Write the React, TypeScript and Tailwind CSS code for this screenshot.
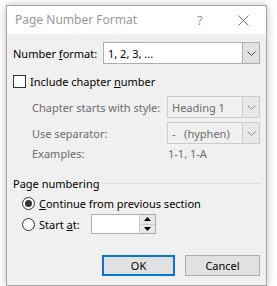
import React from "react";

const Chevron = ({ color = "#404040" }: { color?: string }) => (
    <svg width="9" height="5" viewBox="0 0 9 5" fill="none">
        <path d="M0.5 0.5 L4.5 4.5 L8.5 0.5" stroke={color} strokeWidth="1" />
    </svg>
);

const Dropdown = ({
    value,
    width,
    disabled,
}: {
    value: string;
    width: string;
    disabled?: boolean;
}) => (
    <div
        className={`flex h-[22px] ${width} border ${
            disabled
                ? "border-[#cccccc] bg-[#f0f0f0] text-[#6d6d6d]"
                : "border-[#adadad] bg-white text-black"
        }`}
    >
        <div className="flex flex-1 items-center pl-[4px] whitespace-pre">
            {value}
        </div>
        <div
            className={`flex w-[17px] items-center justify-center border-l ${
                disabled
                    ? "border-[#cccccc] bg-[#e8e8e8]"
                    : "border-[#adadad] bg-[#e1e1e1]"
            }`}
        >
            <Chevron color={disabled ? "#8a8a8a" : "#404040"} />
        </div>
    </div>
);

const Radio = ({ checked }: { checked?: boolean }) => (
    <div className="flex h-[13px] w-[13px] shrink-0 items-center justify-center rounded-full border border-[#333333] bg-white">
        {checked && <div className="h-[7px] w-[7px] rounded-full bg-[#333333]" />}
    </div>
);

const App = () => {
    return (
        <div
            className="h-[286px] w-[277px] bg-white pt-[5px] pl-[6px] text-[11px] leading-none whitespace-nowrap text-black"
            style={{ fontFamily: '"Noto Sans", "Open Sans", sans-serif' }}
        >
            <div className="flex h-[281px] w-[261px] flex-col border border-[#a6a6a6] bg-[#f0f0f0] shadow-[0_0_8px_rgba(0,0,0,0.25)]">
                {/* Title bar */}
                <div className="flex h-[28px] items-center bg-white pl-[8px] text-[12px] text-[#999999]">
                    <span className="flex-1">Page Number Format</span>
                    <span className="w-[14px] text-[13px]">?</span>
                    <div className="ml-[26px] mr-[17px] flex w-[12px] justify-center">
                        <svg width="11" height="11" viewBox="0 0 11 11">
                            <path
                                d="M0.5 0.5 L10.5 10.5 M10.5 0.5 L0.5 10.5"
                                stroke="#777777"
                                strokeWidth="1"
                            />
                        </svg>
                    </div>
                </div>

                {/* Body */}
                <div className="flex flex-col">
                    <div className="mt-[8px] flex h-[22px] items-center pl-[6px]">
                        <span className="w-[90px]">
                            Number <u>f</u>ormat:
                        </span>
                        <Dropdown value="1, 2, 3, ..." width="w-[157px]" />
                    </div>

                    <div className="mt-[11px] flex h-[13px] items-center pl-[6px]">
                        <div className="h-[13px] w-[13px] border border-[#333333] bg-white" />
                        <span className="ml-[4px]">
                            Include chapter <u>n</u>umber
                        </span>
                    </div>

                    <div className="mt-[8px] flex h-[22px] items-center pl-[25px] text-[#6d6d6d]">
                        <span className="w-[135px]">Chapter starts with style:</span>
                        <Dropdown value="Heading 1" width="w-[93px]" disabled />
                    </div>

                    <div className="mt-[4px] flex h-[22px] items-center pl-[25px] text-[#6d6d6d]">
                        <span className="w-[135px]">Use separator:</span>
                        <Dropdown value="-   (hyphen)" width="w-[93px]" disabled />
                    </div>

                    <div className="flex h-[18px] items-center pl-[25px] text-[#6d6d6d]">
                        <span className="w-[136px]">Examples:</span>
                        <span>1-1, 1-A</span>
                    </div>

                    <div className="mt-[12px] flex h-[18px] items-center pl-[6px] pr-[5px]">
                        <span className="w-[90px]">Page numbering</span>
                        <div className="h-px flex-1 bg-[#dcdcdc]" />
                    </div>

                    <div className="mt-[1px] flex h-[20px] items-center pl-[15px]">
                        <Radio checked />
                        <span className="ml-[4px]">
                            <u>C</u>ontinue from previous section
                        </span>
                    </div>

                    <div className="mt-[1px] flex h-[20px] items-center pl-[15px]">
                        <Radio />
                        <span className="ml-[4px] w-[52px]">
                            Start <u>a</u>t:
                        </span>
                        <div className="flex h-[20px] w-[65px] border border-[#adadad] bg-white">
                            <div className="flex-1" />
                            <div className="flex w-[16px] flex-col border-l border-[#d0d0d0] bg-[#e8e8e8]">
                                <div className="flex flex-1 items-center justify-center border-b border-[#c8c8c8]">
                                    <svg width="7" height="4" viewBox="0 0 7 4">
                                        <path d="M3.5 0 L7 4 L0 4 Z" fill="#000" />
                                    </svg>
                                </div>
                                <div className="flex flex-1 items-center justify-center">
                                    <svg width="7" height="4" viewBox="0 0 7 4">
                                        <path d="M0 0 L7 0 L3.5 4 Z" fill="#000" />
                                    </svg>
                                </div>
                            </div>
                        </div>
                    </div>

                    <div className="mt-[21px] flex h-[21px] justify-end gap-[10px] pr-[6px]">
                        <button className="h-[21px] w-[73px] border-2 border-[#0078d7] bg-[#e1e1e1]">
                            OK
                        </button>
                        <button className="h-[21px] w-[75px] border border-[#adadad] bg-[#e1e1e1]">
                            Cancel
                        </button>
                    </div>
                </div>
            </div>
        </div>
    );
};

export default App;
